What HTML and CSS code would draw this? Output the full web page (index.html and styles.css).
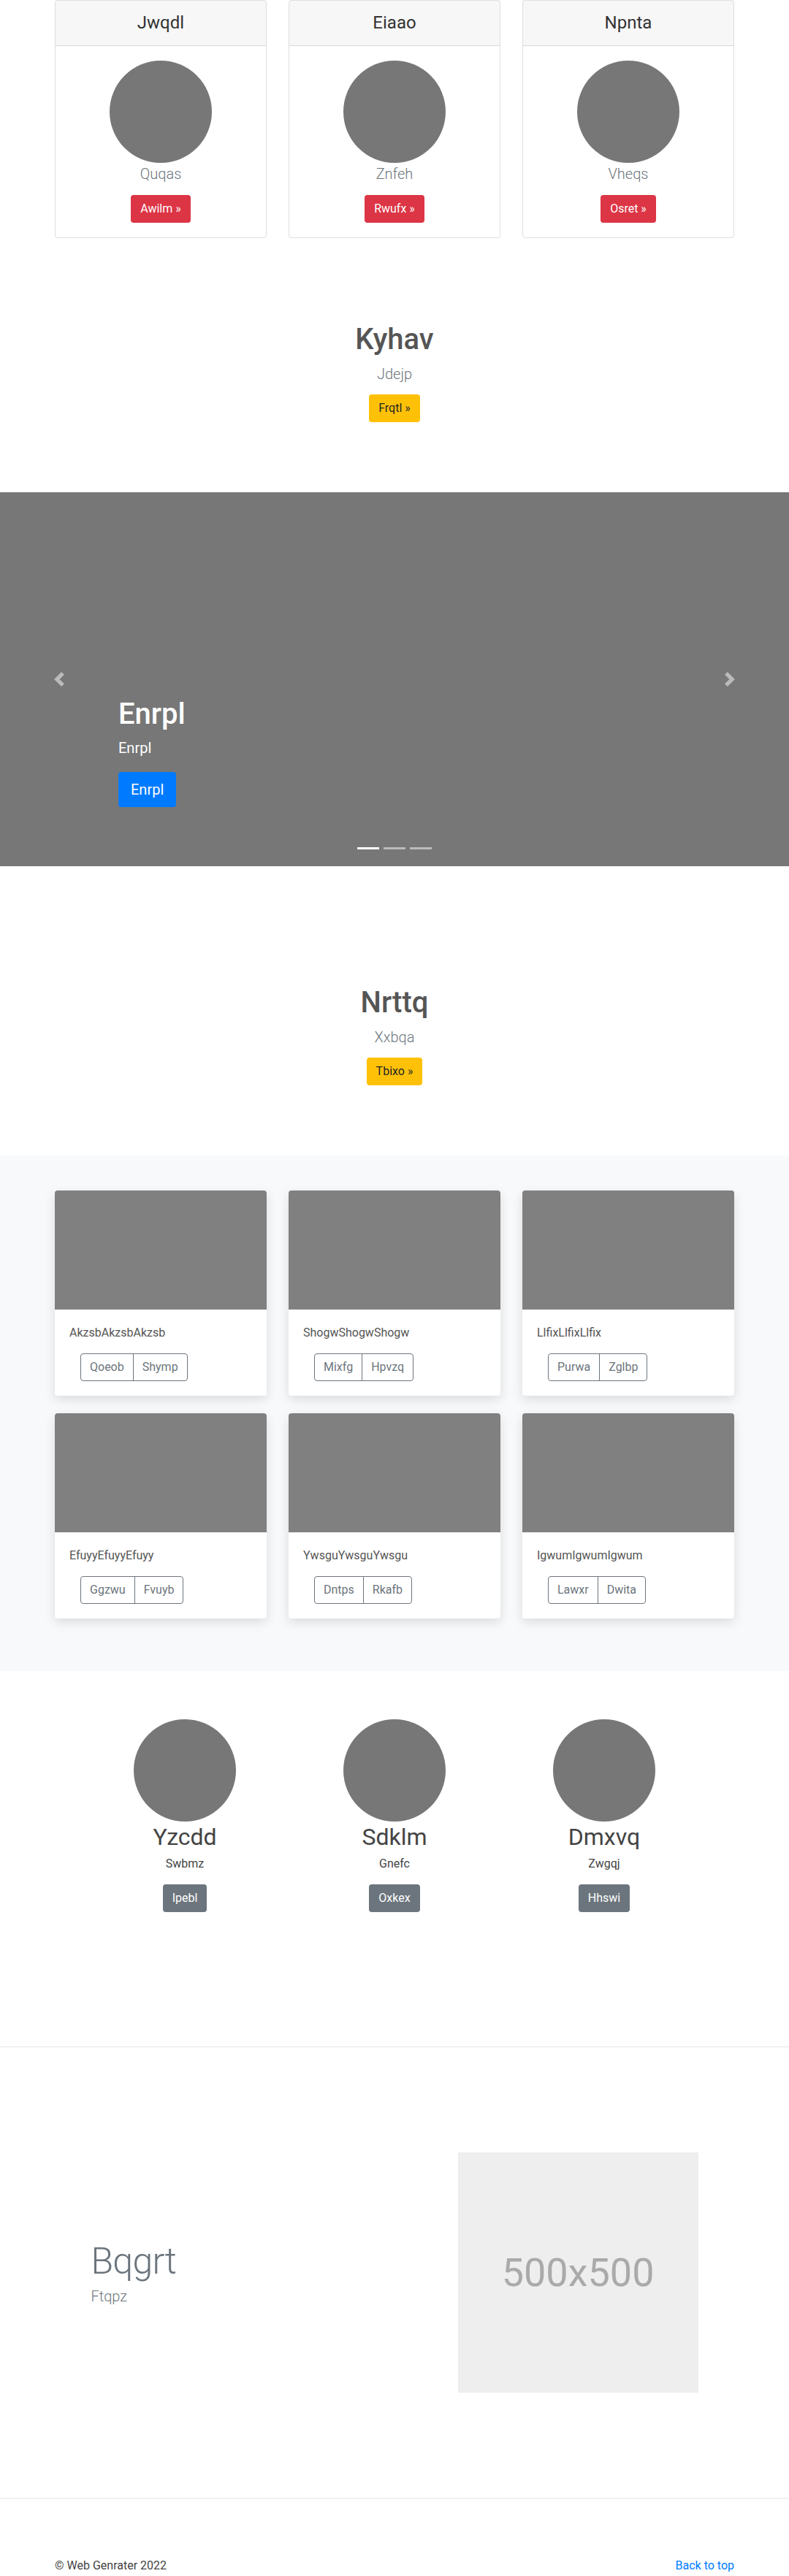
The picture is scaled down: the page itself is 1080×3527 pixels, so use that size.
FILE: index.html
```html
<!DOCTYPE html>
<html lang="en">
<head>
	<meta charset="UTF-8">
	<title>Web Genrater</title>
	<link rel="stylesheet" href="styles.css">
</head>
<body>
	<div class="container">
		<div class="card-deck">
			<div class="card">
				<div class="card-header"><h4>Jwqdl</h4></div>
				<div class="card-body">
					<div class="avatar"></div>
					<p class="lead">Quqas</p>
					<a href="#" class="btn btn-danger">Awilm &raquo;</a>
				</div>
			</div>
			<div class="card">
				<div class="card-header"><h4>Eiaao</h4></div>
				<div class="card-body">
					<div class="avatar"></div>
					<p class="lead">Znfeh</p>
					<a href="#" class="btn btn-danger">Rwufx &raquo;</a>
				</div>
			</div>
			<div class="card">
				<div class="card-header"><h4>Npnta</h4></div>
				<div class="card-body">
					<div class="avatar"></div>
					<p class="lead">Vheqs</p>
					<a href="#" class="btn btn-danger">Osret &raquo;</a>
				</div>
			</div>
		</div>
	</div>

	<div class="intro">
		<h1>Kyhav</h1>
		<p class="lead">Jdejp</p>
		<a href="#" class="btn btn-warning">Frqtl &raquo;</a>
	</div>

	<div class="carousel">
		<a href="#" class="control prev">
			<svg width="20" height="20" viewBox="0 0 8 8"><path fill="#fff" d="M5.25 0l-4 4 4 4 1.5-1.5L4.25 4l2.5-2.5L5.25 0z"/></svg>
		</a>
		<div class="caption">
			<h1>Enrpl</h1>
			<p>Enrpl</p>
			<a href="#" class="btn btn-lg btn-primary">Enrpl</a>
		</div>
		<a href="#" class="control next">
			<svg width="20" height="20" viewBox="0 0 8 8"><path fill="#fff" d="M2.75 0l-1.5 1.5L3.75 4l-2.5 2.5L2.75 8l4-4-4-4z"/></svg>
		</a>
		<ol class="indicators">
			<li class="active"></li>
			<li></li>
			<li></li>
		</ol>
	</div>

	<div class="intro">
		<h1>Nrttq</h1>
		<p class="lead">Xxbqa</p>
		<a href="#" class="btn btn-warning">Tbixo &raquo;</a>
	</div>

	<div class="album">
		<div class="container">
			<div class="album-grid">
				<div class="album-card">
					<div class="thumb"></div>
					<div class="album-body">
						<p>AkzsbAkzsbAkzsb</p>
						<div class="btn-group"><a href="#" class="btn btn-outline">Qoeob</a><a href="#" class="btn btn-outline">Shymp</a></div>
					</div>
				</div>
				<div class="album-card">
					<div class="thumb"></div>
					<div class="album-body">
						<p>ShogwShogwShogw</p>
						<div class="btn-group"><a href="#" class="btn btn-outline">Mixfg</a><a href="#" class="btn btn-outline">Hpvzq</a></div>
					</div>
				</div>
				<div class="album-card">
					<div class="thumb"></div>
					<div class="album-body">
						<p>LlfixLlfixLlfix</p>
						<div class="btn-group"><a href="#" class="btn btn-outline">Purwa</a><a href="#" class="btn btn-outline">Zglbp</a></div>
					</div>
				</div>
				<div class="album-card">
					<div class="thumb"></div>
					<div class="album-body">
						<p>EfuyyEfuyyEfuyy</p>
						<div class="btn-group"><a href="#" class="btn btn-outline">Ggzwu</a><a href="#" class="btn btn-outline">Fvuyb</a></div>
					</div>
				</div>
				<div class="album-card">
					<div class="thumb"></div>
					<div class="album-body">
						<p>YwsguYwsguYwsgu</p>
						<div class="btn-group"><a href="#" class="btn btn-outline">Dntps</a><a href="#" class="btn btn-outline">Rkafb</a></div>
					</div>
				</div>
				<div class="album-card">
					<div class="thumb"></div>
					<div class="album-body">
						<p>IgwumIgwumIgwum</p>
						<div class="btn-group"><a href="#" class="btn btn-outline">Lawxr</a><a href="#" class="btn btn-outline">Dwita</a></div>
					</div>
				</div>
			</div>
		</div>
	</div>

	<div class="marketing">
		<div class="col">
			<div class="avatar"></div>
			<h2>Yzcdd</h2>
			<p>Swbmz</p>
			<a href="#" class="btn btn-secondary">Ipebl</a>
		</div>
		<div class="col">
			<div class="avatar"></div>
			<h2>Sdklm</h2>
			<p>Gnefc</p>
			<a href="#" class="btn btn-secondary">Oxkex</a>
		</div>
		<div class="col">
			<div class="avatar"></div>
			<h2>Dmxvq</h2>
			<p>Zwgqj</p>
			<a href="#" class="btn btn-secondary">Hhswi</a>
		</div>
	</div>

	<div class="featurette">
		<div class="featurette-row">
			<div class="featurette-text">
				<h2>Bqgrt</h2>
				<p class="lead">Ftqpz</p>
			</div>
			<div class="featurette-img">
				<div class="placeholder">500x500</div>
			</div>
		</div>
	</div>

	<footer>
		<div class="container footer-row">
			<p>&copy; Web Genrater 2022</p>
			<a href="#">Back to top</a>
		</div>
	</footer>
</body>
</html>
```

FILE: styles.css
```css
*{
	box-sizing:border-box;
}
body{
	margin:0;
	font-family:-apple-system,"Segoe UI",Roboto,"Helvetica Neue",Arial,"Noto Sans",sans-serif;
	font-size:16px;
	line-height:1.5;
	color:#212529;
	background:#fff;
}
a{
	color:#007bff;
	text-decoration:none;
}
.container{
	width:960px;
	margin:0 auto;
	padding:0 15px;
}

/* buttons */
.btn{
	display:inline-block;
	padding:6px 12px;
	font-size:16px;
	line-height:24px;
	border:1px solid transparent;
	border-radius:4px;
}
.btn-danger{background:#dc3545;color:#fff;}
.btn-warning{background:#ffc107;color:#212529;}
.btn-primary{background:#007bff;color:#fff;}
.btn-secondary{background:#6c757d;color:#fff;}
.btn-lg{
	padding:8px 16px;
	font-size:20px;
	line-height:30px;
}
.btn-outline{
	color:#6c757d;
	border-color:#6c757d;
	background:transparent;
}
.btn-group{
	display:inline-flex;
	margin-left:15px;
}
.btn-group .btn:first-child{
	border-top-right-radius:0;
	border-bottom-right-radius:0;
}
.btn-group .btn:last-child{
	margin-left:-1px;
	border-top-left-radius:0;
	border-bottom-left-radius:0;
}

.lead{
	font-size:20px;
	font-weight:300;
	line-height:30px;
	color:#6c757d;
	margin:0;
}
.avatar{
	width:140px;
	height:140px;
	border-radius:50%;
	background:#777;
	margin:0 auto;
}

/* pricing cards */
.card-deck{
	display:grid;
	grid-template-columns:repeat(3,1fr);
	gap:30px;
}
.card{
	border:1px solid rgba(0,0,0,.125);
	border-radius:4px;
	text-align:center;
}
.card-header{
	background:rgba(0,0,0,.03);
	border-bottom:1px solid rgba(0,0,0,.125);
	padding:16px 20px;
}
.card-header h4{
	margin:0;
	font-size:24px;
	font-weight:400;
	line-height:29px;
	color:#333;
}
.card-body{
	padding:20px;
}
.card-body .lead{
	margin:0 0 14px;
}

/* centered intro */
.intro{
	text-align:center;
	padding:115px 0 96px;
}
.intro h1{
	margin:0 0 8px;
	font-size:40px;
	font-weight:500;
	line-height:48px;
	color:#555;
}
.intro .lead{
	margin-bottom:13px;
}

/* carousel */
.carousel{
	position:relative;
	height:512px;
	background:#777;
	margin-bottom:48px;
}
.control{
	position:absolute;
	top:0;
	bottom:0;
	width:15%;
	display:flex;
	align-items:center;
	justify-content:center;
	opacity:.5;
}
.prev{left:0;}
.next{right:0;}
.caption{
	position:absolute;
	left:15%;
	right:15%;
	bottom:81px;
	color:#fff;
}
.caption h1{
	margin:0 0 7px;
	font-size:40px;
	font-weight:500;
	line-height:48px;
}
.caption p{
	margin:0 0 18px;
	font-size:20px;
	line-height:30px;
}
.indicators{
	position:absolute;
	left:0;
	right:0;
	bottom:23px;
	margin:0;
	padding:0;
	list-style:none;
	display:flex;
	justify-content:center;
}
.indicators li{
	width:30px;
	height:3px;
	margin:0 3px;
	background:#fff;
	opacity:.5;
}
.indicators li.active{
	opacity:1;
}

/* album */
.album{
	background:#f8f9fa;
	padding:48px 0;
}
.album-grid{
	display:grid;
	grid-template-columns:repeat(3,1fr);
	column-gap:30px;
}
.album-card{
	background:#fff;
	border-radius:4px;
	overflow:hidden;
	margin-bottom:24px;
	box-shadow:0 5px 15px rgba(0,0,0,.12);
}
.thumb{
	height:163px;
	background:#808080;
}
.album-body{
	padding:20px;
}
.album-body p{
	margin:0 0 16px;
	color:#555;
}

/* marketing */
.marketing{
	width:861px;
	margin:0 auto;
	padding:66px 0 184px;
	display:grid;
	grid-template-columns:repeat(3,1fr);
	text-align:center;
}
.marketing .col{
	padding:0 15px;
}
.marketing h2{
	margin:2px 0 6px;
	font-size:32px;
	font-weight:400;
	line-height:38px;
	color:#444;
}
.marketing p{
	margin:0 0 16px;
	color:#444;
}

/* featurette */
.featurette{
	border-top:1px solid #e5e5e5;
	padding:144px 0;
}
.featurette-row{
	width:861px;
	margin:0 auto;
	display:grid;
	grid-template-columns:7fr 5fr;
	align-items:center;
}
.featurette-text,.featurette-img{
	padding:0 15px;
}
.featurette-text h2{
	margin:8px 0 8px;
	font-size:50px;
	font-weight:300;
	line-height:1;
	letter-spacing:-.05rem;
	color:#6c757d;
}
.placeholder{
	aspect-ratio:1;
	background:#eee;
	color:#aaa;
	font-size:54px;
	display:flex;
	align-items:center;
	justify-content:center;
}

/* footer */
footer{
	border-top:1px solid #e5e5e5;
	padding-top:80px;
}
.footer-row{
	display:flex;
	justify-content:space-between;
}
.footer-row p{
	margin:0 0 16px;
	color:#444;
}
```
